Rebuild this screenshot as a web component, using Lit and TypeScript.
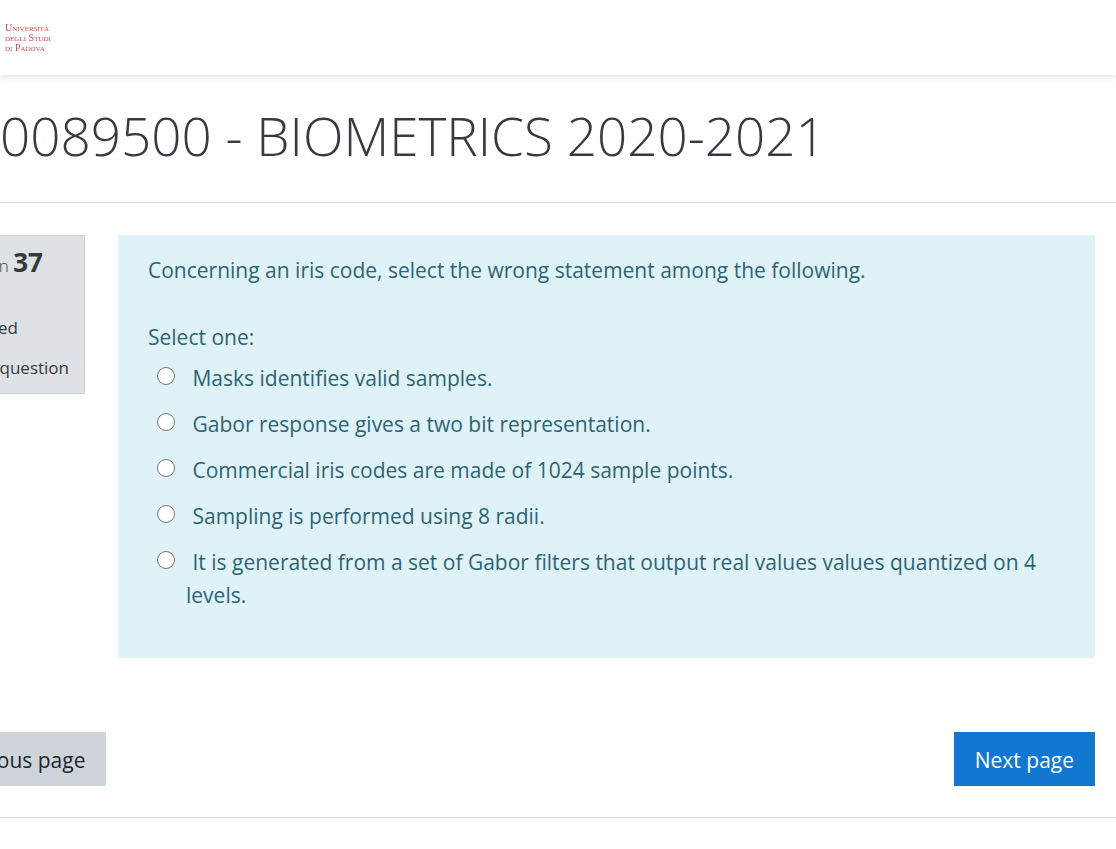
import { LitElement, html, css } from "lit";
import { customElement, state } from "lit/decorators.js";

const ANSWERS = [
  "Masks identifies valid samples.",
  "Gabor response gives a two bit representation.",
  "Commercial iris codes are made of 1024 sample points.",
  "Sampling is performed using 8 radii.",
  "It is generated from a set of Gabor filters that output real values values quantized on 4 levels.",
];

@customElement("app-root")
export class AppRoot extends LitElement {
  @state() private selected = -1;

  static styles = css`
    :host {
      display: block;
      min-height: 100vh;
      overflow: hidden;
      background: #fff;
      color: #373a3c;
      font: 21px/33px "Segoe UI", "Open Sans", "Noto Sans", sans-serif;
    }
    * { box-sizing: border-box; }
    .top {
      height: 75px;
      display: flex;
      align-items: center;
      padding: 0 5px;
      background: #fff;
      box-shadow: 0 2px 6px rgba(0, 0, 0, 0.12);
    }
    .logo {
      color: #cf4a50;
      font: 10px/10px "Liberation Serif", serif;
      font-variant: small-caps;
      text-decoration: none;
      filter: blur(0.5px);
    }
    .title {
      display: flex;
      align-items: center;
      height: 128px;
      border-bottom: 1px solid #dee2e6;
    }
    h1 {
      margin: 0;
      padding-bottom: 6px;
      font-size: 53px;
      line-height: 66px;
      font-weight: 300;
      color: #373a40;
      white-space: nowrap;
    }
    .question {
      display: grid;
      grid-template-columns: 162px 1fr;
      gap: 33px;
      align-items: start;
      margin: 32px 21px 0 -77px;
    }
    .info {
      height: 159px;
      padding: 10px 15px;
      background: #dee2e6;
      border: 1px solid #cad0d7;
      font-size: 17px;
      line-height: 26px;
      white-space: nowrap;
    }
    .info h2 {
      margin: 0 0 33px;
      font-size: 17px;
      line-height: 33px;
      font-weight: 300;
    }
    .info b { font-size: 26px; font-weight: 700; }
    .info p { margin: 0 0 14px; }
    .flag {
      display: flex;
      gap: 5px;
      color: inherit;
      text-decoration: none;
    }
    .flag svg { width: 18px; margin-right: 3px; }
    .body {
      min-width: 0;
      padding: 19px 30px 46px;
      background: #def2f8;
      color: #2f6473;
    }
    .body p { margin: 0 0 34px; }
    fieldset { margin: 0; padding: 0; border: 0; min-width: 0; }
    legend { padding: 0; margin-bottom: 8px; }
    .answers { display: grid; gap: 13px; }
    .answer { padding-left: 38px; text-indent: -29px; }
    .answer input {
      appearance: none;
      width: 18px;
      height: 18px;
      margin: 0 12px 0 0;
      border: 1px solid #767676;
      border-radius: 50%;
      background: #fff;
      vertical-align: 1px;
    }
    .answer input:checked { border: 5px solid #1177d1; }
    nav {
      display: flex;
      justify-content: space-between;
      margin: 74px 21px 31px -73px;
    }
    button {
      height: 54px;
      padding: 3px 21px 0;
      border: 0;
      background: #1177d1;
      color: #fff;
      font: inherit;
    }
    .prev { background: #ced4da; color: #212529; }
    hr { margin: 0; border: 0; border-top: 1px solid #dee2e6; }
  `;

  render() {
    return html`
      <header class="top">
        <a class="logo" href="#">Università<br />degli Studi<br />di Padova</a>
      </header>
      <div class="title"><h1>0089500 - BIOMETRICS 2020-2021</h1></div>
      <main>
        <section class="question">
          <aside class="info">
            <h2>Question <b>37</b></h2>
            <p>Answered</p>
            <a class="flag" href="#">
              <svg viewBox="0 0 18 26" aria-hidden="true">
                <path d="M2 6v16M2 7h13l-4 4 4 4H2" fill="none" stroke="currentColor" stroke-width="2" />
              </svg>
              Flag question
            </a>
          </aside>
          <div class="body">
            <p>Concerning an iris code, select the wrong statement among the following.</p>
            <fieldset>
              <legend>Select one:</legend>
              <div class="answers">
                ${ANSWERS.map(
                  (text, i) => html`<div class="answer">
                    <input type="radio" name="answer" id="answer-${i}" .checked=${this.selected === i}
                      @change=${() => (this.selected = i)} /><label for="answer-${i}"> ${text}</label>
                  </div>`
                )}
              </div>
            </fieldset>
          </div>
        </section>
        <nav>
          <button class="prev" type="button">Previous page</button>
          <button type="button">Next page</button>
        </nav>
      </main>
      <hr />
    `;
  }
}
